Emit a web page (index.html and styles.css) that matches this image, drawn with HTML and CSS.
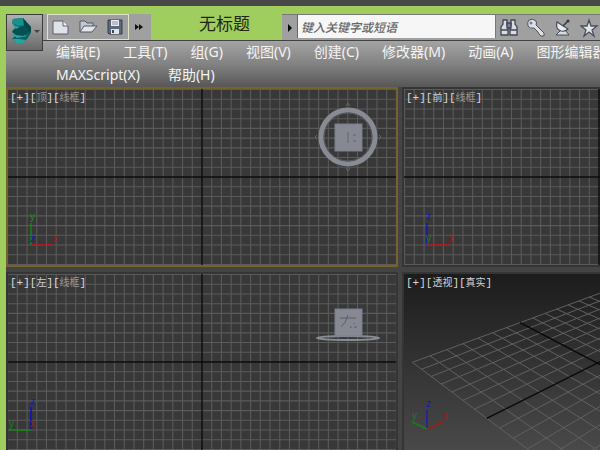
FILE: index.html
```html
<!DOCTYPE html>
<html lang="zh-CN">
<head>
<meta charset="utf-8">
<title>无标题</title>
<link rel="stylesheet" href="styles.css">
</head>
<body>
<div class="app">
  <header class="titlebar">
    <button class="app-button" aria-label="应用程序">
      <svg width="36" height="36" viewBox="0 0 36 36">
        <path d="M6 4l10-1 4 5 4 4v6l-4 6-4 4H9l-4-4 4-4-4-4 4-4-4-4z" fill="#0b6265"/>
        <path d="M6 4l10-1 3 7-8 1-6-3z" fill="#17918c"/>
        <path d="M5 10l8 2-4 2zM5 19l8-1 7 3-10 2zM5 24l7 0 7 1-3 3H9z" fill="#27a49d"/>
        <path d="M9 14l7-3 8 5-8 5-7-1-4-3z" fill="#074f53"/>
        <path d="M16 3l8 9v5l-7-6z" fill="#06474c"/>
        <path d="M27 15h6l-3 3z" fill="#3a4350"/>
      </svg>
    </button>
    <div class="quick">
      <div class="quick-box">
        <button class="tool" aria-label="新建">
          <svg width="20" height="18" viewBox="0 0 20 18"><path d="M2 3h10l5 5v8H2z" fill="#dfe2e7" stroke="#5a616d"/><path d="M12 3v5h5" fill="#f7f7f8" stroke="#5a616d"/></svg>
        </button>
        <button class="tool" aria-label="打开">
          <svg width="20" height="18" viewBox="0 0 20 18"><path d="M2 14V3h5l2 2h6v3" fill="#c3c8d0" stroke="#525a67"/><path d="M2 14l4-6h13l-5 6z" fill="#e1e4e8" stroke="#525a67"/></svg>
        </button>
        <button class="tool" aria-label="保存">
          <svg width="20" height="18" viewBox="0 0 20 18"><path d="M3 2h14v14H4l-1-1z" fill="#5c687b" stroke="#343d4a"/><path d="M6 2h8v6H6z" fill="#e9ebee"/><path d="M7 4h6M7 6h6" stroke="#8d949e"/><path d="M6 11h8v5H6z" fill="#dfe2e6"/><path d="M7 12h2v3H7z" fill="#3e4857"/></svg>
        </button>
      </div>
      <button class="more" aria-label="更多">
        <svg width="10" height="8" viewBox="0 0 10 8"><path d="M1 1l4 3-4 3zM5 1l4 3-4 3z" fill="#111"/></svg>
      </button>
    </div>
    <h1 class="title">无标题</h1>
    <div class="search">
      <button class="search-toggle" aria-label="展开">
        <svg width="6" height="10" viewBox="0 0 6 10"><path d="M1 1l4 4-4 4z" fill="#080808"/></svg>
      </button>
      <input class="search-input" type="text" aria-label="搜索" placeholder="键入关键字或短语">
      <div class="search-tools">
        <button class="tool" aria-label="查找">
          <svg width="20" height="20" viewBox="0 0 20 20"><g fill="#d9dde3" stroke="#3f4854" stroke-width="1.3"><path d="M4 2h4v5l1 2v8H2V9l2-3zM12 2h4v4l2 3v8h-7V9l1-2z"/><path d="M8 5h4v5H8z" fill="#77808c"/><path d="M2 12h7M11 12h7"/></g></svg>
        </button>
        <button class="tool" aria-label="密钥">
          <svg width="20" height="20" viewBox="0 0 20 20"><path d="M3 2q4-2 7 1 1 2 0 4l8 8v3h-3l-2-2-1-2-4-4q-4 1-6-2-1-4 1-6z" fill="#dde0e5" stroke="#4b535f"/><circle cx="5" cy="5" r="1.5" fill="#78818d"/></svg>
        </button>
        <button class="tool" aria-label="通讯中心">
          <svg width="20" height="20" viewBox="0 0 20 20"><path d="M8 12l-5 5h13l-4-5" fill="#d9dde2" stroke="#444c58"/><path d="M4 4q-2 7 4 9 4 1 7-2z" fill="#e9ecef" stroke="#444c58" stroke-width="1.2"/><path d="M10 8l5-5" stroke="#333b46" stroke-width="1.5"/><circle cx="15" cy="3" r="1.6" fill="#333b46"/></svg>
        </button>
        <button class="tool" aria-label="收藏">
          <svg width="20" height="20" viewBox="0 0 20 20"><path d="M9 2l2 6h6l-5 4 2 6-5-4-5 4 2-6-5-4h6z" fill="#e4e7ea" stroke="#47505c" stroke-width="1.3"/></svg>
        </button>
      </div>
    </div>
  </header>
  <nav class="menu">
    <a href="#">编辑(E)</a><a href="#">工具(T)</a><a href="#">组(G)</a><a href="#">视图(V)</a><a href="#">创建(C)</a><a href="#">修改器(M)</a><a href="#">动画(A)</a><a href="#">图形编辑器</a>
  </nav>
  <nav class="menu menu-second">
    <a href="#">MAXScript(X)</a><a href="#">帮助(H)</a>
  </nav>
  <main class="viewports">
    <section class="viewport active">
      <svg class="scene" data-cx="194" data-cy="88">
        <g class="grid"></g>
        <g class="axis"><path d="M23 156V134" stroke="#128a12"/><path d="M23 156H46" stroke="#c01414"/><text x="22" y="131" fill="#1b901b">y</text><text x="22" y="153" fill="#1717c0">z</text><text x="45" y="153" fill="#a01b1b">x</text></g>
        <g><circle cx="340" cy="48" r="27" fill="none" stroke="#888b94" stroke-width="5"/><circle cx="340" cy="48" r="24" fill="none" stroke="#5c6068"/><path d="M338 17l2-3 2 3M338 79l2 3 2-3M309 46l-2 2 2 2M371 46l2 2-2 2" fill="none" stroke="#62666e"/><rect x="327" y="35" width="27" height="27" fill="#868991" stroke="#75808f"/><path d="M340 43v11M345 46h3M345 52h3" stroke="#62656d"/></g>
      </svg>
      <h2 class="label">[+][<span>顶</span>][<span>线框</span>]</h2>
    </section>
    <section class="viewport">
      <svg class="scene" data-cx="195" data-cy="88">
        <g class="grid"></g>
        <g class="axis"><path d="M23 156V134" stroke="#1515c4"/><path d="M23 156H46" stroke="#c01414"/><text x="22" y="131" fill="#1717c0">z</text><text x="22" y="153" fill="#1b801b">y</text><text x="45" y="153" fill="#b01414">x</text></g>
      </svg>
      <h2 class="label">[+][<span class="bright">前</span>][<span>线框</span>]</h2>
    </section>
    <section class="viewport">
      <svg class="scene" data-cx="194" data-cy="88">
        <g class="grid"></g>
        <g class="axis"><path d="M23 155V133" stroke="#0b0bd0"/><path d="M1 156H23" stroke="#128a12"/><text x="22" y="131" fill="#1717c0">z</text><text x="22" y="153" fill="#9f1b1b">x</text><text x="1" y="153" fill="#1b801b">y</text></g>
        <g><ellipse cx="340" cy="64" rx="31" ry="2" fill="none" stroke="#888d93" stroke-width="2"/><rect x="327" y="35" width="27" height="27" fill="#868991" stroke="#75808f"/><path d="M332 44h16M340 41q-2 8-7 12M346 49v1M342 53h2M346 53h3" fill="none" stroke="#5b5e66"/></g>
      </svg>
      <h2 class="label">[+][<span class="bright">左</span>][<span>线框</span>]</h2>
    </section>
    <section class="viewport perspective">
      <svg class="scene">
        <g class="floor"></g>
        <g class="axis"><path d="M23 155V136" stroke="#1a1ab8"/><path d="M23 155L39 148" stroke="#a01b1b"/><path d="M23 155L8 148" stroke="#1f7a1f"/><text x="22" y="133" fill="#1717c0">z</text><text x="39" y="145" fill="#a01b1b">x</text><text x="8" y="145" fill="#1f7a1f">y</text></g>
      </svg>
      <h2 class="label">[+][<span class="bright">透视</span>][<span class="bright">真实</span>]</h2>
    </section>
  </main>
</div>
<script src="grid.js"></script>
</body>
</html>
```
FILE: styles.css
```css
* { box-sizing: border-box; }
body {
  margin: 0;
  background: #484848;
  font-family: "Noto Sans", "Noto Sans CJK SC", sans-serif;
  overflow: hidden;
}
button { border: 0; padding: 0; background: none; display: grid; place-items: center; }
svg { display: block; }
.app {
  display: flex;
  flex-direction: column;
  min-height: calc(100vh - 6px);
  margin-top: 6px;
  border-left: 6px solid #a0ce5e;
  background: #444;
}
.titlebar {
  display: flex;
  height: 35px;
  padding-top: 8px;
  background: #a0ce5e;
  border-bottom: 1px solid #424242;
}
.app-button {
  position: relative;
  z-index: 1;
  width: 37px;
  height: 37px;
  border: 1px solid #3c3c3c;
  background: linear-gradient(#b0b0b0, #696969);
  flex: none;
}
.quick { display: flex; width: 108px; padding-left: 4px; background: #a0a0a0; flex: none; }
.quick-box { display: flex; gap: 7px; width: 82px; padding-left: 3px; border: 1px solid #e0e2c8; }
.tool { width: 20px; }
.more { width: 20px; }
.title {
  flex: 1;
  margin: 0;
  padding-left: 16px;
  text-align: center;
  font-size: 17px;
  line-height: 20px;
  font-weight: 400;
  color: #20290f;
}
.search { display: flex; width: 55%; max-width: 318px; background: #a0a0a0; flex: none; border-top: 1px solid #777; }
.search-toggle { width: 15px; }
.search-input {
  flex: 1;
  min-width: 0;
  border: 0;
  border-left: 1px solid #666;
  border-right: 1px solid #777;
  margin-bottom: 2px;
  padding: 0 3px;
  background: #f6f6f6;
  font: italic 500 12px "Noto Sans CJK SC", sans-serif;
}
.search-input::placeholder { color: #666; opacity: 1; }
.search-tools { display: flex; gap: 7px; padding-left: 3px; }
.menu {
  display: flex;
  gap: 23px;
  height: 23px;
  padding-left: 50px;
  background: linear-gradient(#a4a4a4, #828282);
  font-size: 14px;
  line-height: 22px;
  white-space: nowrap;
  overflow: hidden;
}
.menu-second { gap: 28px; background: linear-gradient(#828282, #575757); }
.menu a { color: #f4f4f4; text-decoration: none; }
.viewports {
  flex: 1;
  display: grid;
  grid-template-columns: 196fr minmax(0, 99fr);
  grid-template-rows: 180px minmax(177px, 1fr);
  gap: 5px 4px;
}
.viewport {
  position: relative;
  border: 2px solid #353535;
  background: #383838;
  overflow: hidden;
}
.viewport:nth-child(even) { border-right: 0; }
.viewport:nth-child(n+3) { border-bottom: 0; }
.viewport.active { border-color: #75622c; }
.perspective { background: linear-gradient(#1c1c1c, #494949); }
.scene { position: absolute; inset: 0; width: 100%; height: 100%; }
.label {
  position: relative;
  margin: 0;
  padding: 0 2px;
  font: 400 11px/18px "Liberation Mono", "Noto Sans CJK SC", monospace;
  color: #d8d8d8;
}
.label span { color: #999; font-size: 10px; }
.label .bright { color: #d0d0d0; }
.axis path { fill: none; stroke-width: 1.4; }
.axis text { font: 10px "Liberation Sans", sans-serif; }
```
FILE: grid.js
```js
const NS = "http://www.w3.org/2000/svg";

function line(parent, x1, y1, x2, y2, stroke, width) {
  const el = document.createElementNS(NS, "path");
  el.setAttribute("d", `M${x1} ${y1}L${x2} ${y2}`);
  el.setAttribute("stroke", stroke);
  el.setAttribute("stroke-width", width);
  parent.append(el);
}

// Orthographic views: an even grid around the origin, black main axes on top.
const STEP = 9.72;
document.querySelectorAll(".scene[data-cx]").forEach((svg) => {
  const g = svg.querySelector(".grid");
  const cx = +svg.dataset.cx;
  const cy = +svg.dataset.cy;
  for (let i = -60; i <= 60; i++) {
    if (i === 0) continue;
    line(g, cx + i * STEP, 0, cx + i * STEP, 2000, "#5a5a5a", 1.1);
    line(g, 0, cy + i * STEP, 3000, cy + i * STEP, "#5a5a5a", 1.1);
  }
  line(g, cx, 0, cx, 2000, "#0c0c0c", 1.4);
  line(g, 0, cy, 3000, cy, "#0c0c0c", 1.4);
});

// Perspective view: a 14 by 14 floor projected to the screen.
function project(u, v) {
  const d = 1 + 0.0254 * u - 0.0217 * v;
  return [
    (52 + 55.67 * u + 25.9 * v) / d / 3 - 9,
    (307 - 12.23 * u + 13.69 * v) / d / 3 - 14,
  ];
}
const floor = document.querySelector(".floor");
for (const pass of [false, true]) {
  for (let i = 0; i <= 14; i++) {
    if ((i === 7) !== pass) continue;
    const stroke = pass ? "#080808" : "#606060";
    const width = pass ? 1.4 : 1;
    line(floor, ...project(i, 0), ...project(i, 14), stroke, width);
    line(floor, ...project(0, i), ...project(14, i), stroke, width);
  }
}
```
